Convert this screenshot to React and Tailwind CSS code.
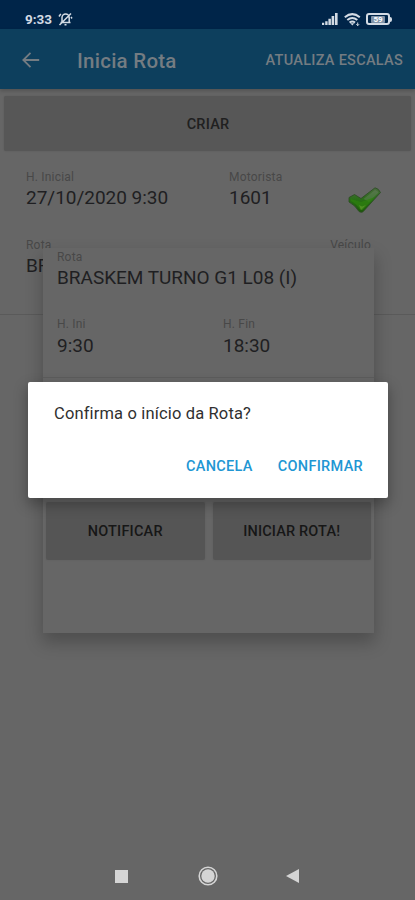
import React from "react";

function Field({ label, value, className = "", gap = "mt-[4px]" }) {
  return (
    <div className={`flex flex-col whitespace-nowrap ${className}`}>
      <span className="text-[12px] leading-[14px] tracking-[0.2px] text-[#484848]">{label}</span>
      <span className={`${gap} text-[19px] leading-[22px] tracking-[-0.02px] text-[#1f1f22]`}>{value}</span>
    </div>
  );
}

function StatusBar() {
  return (
    <div className="flex h-[29px] items-start bg-[#002549] pt-[11px] pl-[25px] text-[#d3dbe4]">
      <span className="w-[28px] text-[13.5px] font-bold leading-[16px]">9:33</span>
      <svg className="ml-[5px] mt-px" width="15" height="14" viewBox="0 0 15 14" fill="none" stroke="currentColor" strokeWidth="1.5">
        <path d="M4 10V5.5a3.6 3.6 0 0 1 7.2 0V10M2.5 10.5h10M6.5 12.7h2M1.5 13 13 1.5M2.8 1.8 1 4.5M13 5l1 1.5" />
      </svg>
      <svg className="ml-[249px] mt-[2px]" width="16" height="12" viewBox="0 0 16 12" fill="currentColor">
        <path d="M0 9.8h2.2V12H0zM3.2 8.2h2.4V12H3.2zM6.4 5.8h2.5V12H6.4zM9.6 3h2.6v9H9.6zM13 0h2.6v12H13z" />
      </svg>
      <svg className="ml-[6px] mt-[2px]" width="17" height="13" viewBox="0 0 17 13" fill="none" stroke="currentColor" strokeWidth="2">
        <path d="M.8 4.3Q8.3-2 15.8 4.3M3.3 7.1q5-4.2 10 0M5.6 9.6q2.7-2.2 5.4 0" />
        <path d="m6.3 10.3 2 2.2 2-2.2z" fill="currentColor" stroke="none" />
        <path d="M13.7 9.5v3.3M12.3 11.2l1.4 1.4 1.4-1.4" strokeWidth="1" />
      </svg>
      <div className="ml-[5px] mt-[2px] flex items-center">
        <div className="flex h-[12px] w-[24px] items-center justify-center rounded-[3px] border-2 border-current">
          <span className="rounded-[1px] bg-[#8194a9] px-[2px] text-[8px] font-bold leading-[7px] text-white">59</span>
        </div>
        <span className="h-[5px] w-[2px] rounded-r-sm bg-current" />
      </div>
    </div>
  );
}

function AppBar() {
  return (
    <header className="relative flex h-[60px] items-center bg-[#0d3f5d] pl-[21px] pr-[12px] text-[#747c82] shadow-[0_2px_4px_rgba(0,0,0,0.2)]">
      <svg className="mt-px" width="19" height="18" viewBox="0 0 19 18" fill="none" stroke="currentColor" strokeWidth="1.8">
        <path d="M18.2 9H2M9.5 1.8 2.3 9l7.2 7.2" />
      </svg>
      <h1 className="ml-[37px] mt-[3px] text-[20.5px] font-medium leading-6 tracking-[0.25px]">Inicia Rota</h1>
      <span className="ml-auto mt-[4px] whitespace-nowrap text-[14.5px] font-medium tracking-[0.28px]">ATUALIZA ESCALAS</span>
    </header>
  );
}

function CheckMark() {
  return (
    <svg width="34" height="27" viewBox="0 0 34 27">
      <defs>
        <linearGradient id="leaf" x1="0" y1="0" x2="0" y2="1">
          <stop offset="0" stopColor="#4b6b40" />
          <stop offset=".5" stopColor="#286e16" />
          <stop offset="1" stopColor="#1d5809" />
        </linearGradient>
      </defs>
      <path d="M1 10.500 6.500 7.500l6.500 4L27 .8q3.500.5 5.500 4.700L15 24.800q-2 1.200-4-.3Q7 18 1 15z" fill="url(#leaf)" stroke="#2b4b22" strokeWidth=".8" />
      <path d="M15.500 12 27 3q2.500.5 3.500 2.500L21 15q-3-2-5.500-3z" fill="#71856a" opacity=".4" />
      <path d="m3 12 10 3 14-5-12.500 13-2.500-.5q-3-5.500-9-8.500z" fill="#2d800f" opacity=".75" />
      <path d="m11 18 3 1.500 4-1.500-5 5z" fill="#669c30" opacity=".6" />
    </svg>
  );
}

function RouteCard() {
  return (
    <section className="absolute left-[43px] top-[248px] flex h-[385px] w-[331px] flex-col bg-[#666666] shadow-[0_9px_16px_1px_rgba(0,0,0,0.23)]">
      <div className="pl-[14px] pt-[2px]">
        <Field label="Rota" value="BRASKEM TURNO G1 L08 (I)" gap="mt-[3px]" />
      </div>
      <div className="mt-[28px] flex pl-[14px]">
        <Field label="H. Ini" value="9:30" className="w-[166px]" />
        <Field label="H. Fin" value="18:30" />
      </div>
      <div className="mt-[20px] h-px bg-[#5c5c5c]" />
      <div className="mt-auto mb-[73px] flex gap-[8px] px-[3px] text-[14.5px] font-medium text-[#171717]">
        <div className="flex h-[58px] flex-1 items-center justify-center rounded-[2px] bg-[#555555] pt-[2px] tracking-[0.2px] shadow-[0_0_2px_rgba(0,0,0,0.1)]">NOTIFICAR</div>
        <div className="flex h-[58px] flex-1 items-center justify-center rounded-[2px] bg-[#555555] pt-[2px] tracking-[0.15px] shadow-[0_0_2px_rgba(0,0,0,0.1)]">INICIAR ROTA!</div>
      </div>
    </section>
  );
}

function ConfirmDialog() {
  return (
    <div role="dialog" className="absolute left-[28px] top-[382px] flex h-[116px] w-[360px] flex-col rounded-[2px] bg-white shadow-[0_6px_14px_1px_rgba(0,0,0,0.28)]">
      <p className="ml-[26px] mt-[21px] whitespace-nowrap text-[16.5px] leading-[22px] tracking-[0.15px] text-[#303030]">Confirma o início da Rota?</p>
      <div className="mt-[32px] flex justify-end gap-[25px] pr-[25px] text-[14.5px] font-medium leading-[20px] tracking-[0.3px] text-[#2196d3]">
        <button>CANCELA</button>
        <button>CONFIRMAR</button>
      </div>
    </div>
  );
}

export default function App() {
  return (
    <div className="relative flex h-[900px] w-[415px] flex-col overflow-hidden bg-[#666666] font-['Roboto','Noto_Sans',sans-serif]">
      <StatusBar />
      <AppBar />
      <div className="mx-[4px] mt-[7px] flex h-[55px] items-center justify-center rounded-[2px] bg-[#575757] pt-[2px] text-[14.5px] font-medium text-[#202020] shadow-[0_0_2px_rgba(0,0,0,0.15)]">
        <span className="ml-px tracking-[0.2px]">CRIAR</span>
      </div>
      <main className="flex h-[164px] flex-col border-b border-[#5a5a5a] px-[26px] pt-[19px]">
        <div className="flex">
          <Field label="H. Inicial" value="27/10/2020 9:30" gap="mt-[3px]" className="w-[203px]" />
          <Field label="Motorista" value="1601" gap="mt-[3px]" className="w-[119px]" />
          <div className="mt-[17px]"><CheckMark /></div>
        </div>
        <div className="mt-[24px] flex justify-between">
          <Field label="Rota" value="BRASKEM" gap="mt-[3px]" />
          <Field label="Veículo" value="" className="mr-[18px]" />
        </div>
      </main>
      <nav className="mt-auto mb-[14px] flex items-center pl-[115px] text-[#d5d5d5]">
        <span className="h-[13px] w-[13px] bg-current" />
        <svg className="ml-[70px]" width="20" height="20" viewBox="0 0 20 20">
          <circle cx="10" cy="10" r="8.8" fill="none" stroke="currentColor" strokeWidth="1.6" />
          <circle cx="10" cy="10" r="6.7" fill="currentColor" />
        </svg>
        <svg className="ml-[68px]" width="13" height="14" viewBox="0 0 13 14" fill="currentColor">
          <path d="M0 7 13 0v14z" />
        </svg>
      </nav>
      <RouteCard />
      <ConfirmDialog />
    </div>
  );
}
